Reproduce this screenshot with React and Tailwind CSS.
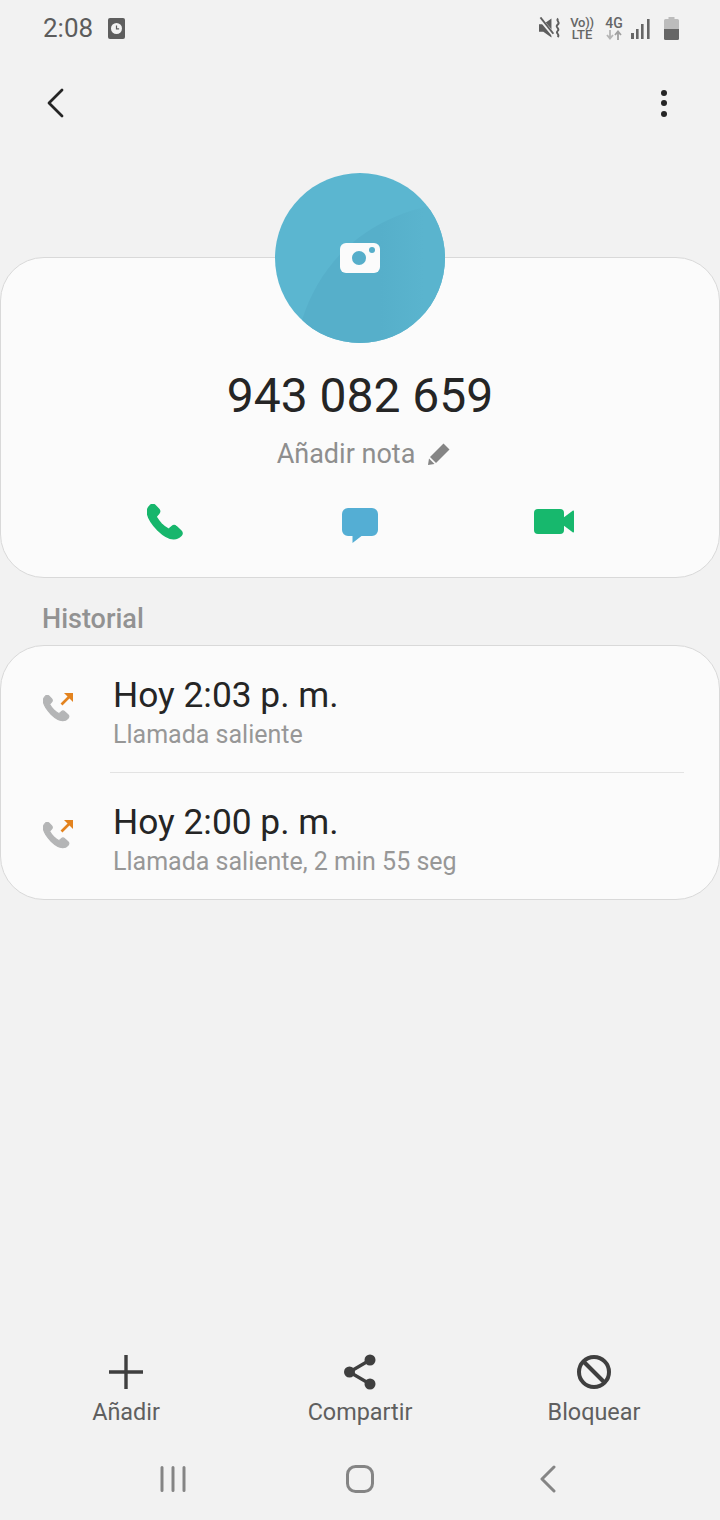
import React from "react";

const font = { fontFamily: "Roboto, sans-serif" };

function PhoneGlyph({ className, fill }) {
  // handset running from top left to bottom right
  return (
    <svg className={className} viewBox="0 0 38 38" fill={fill} stroke={fill} strokeWidth="1.6" strokeLinejoin="round">
      <path d="M3.2 1.6C4.6.2 6.6.2 7.9 1.4l3.6 3.7c1.3 1.3 1.3 3 .2 4.3l-2 2.3c-.5.6-.5 1.2-.1 2 1.2 2.2 2.8 4.3 4.8 6.3 2 1.9 4 3.5 6.2 4.7.8.4 1.4.4 2-.1l2.4-2.1c1.3-1.1 3-1.1 4.3.2l4.5 4.1c1.4 1.4 1.4 3.4.1 4.8-1.9 2.2-4.4 3.3-7.4 3.2-4.2-.2-9.9-3.3-15.5-8.7C5.6 20.6 1.2 14.1.5 9 .1 6 1 3.6 3.2 1.6Z" />
    </svg>
  );
}

function OutgoingIcon() {
  return (
    <div className="relative w-[30px] h-[30px]">
      <PhoneGlyph className="absolute left-0 bottom-0 w-[28px] h-[28px]" fill="#b4b5b6" />
      <svg className="absolute right-[-1px] top-[-1px] w-[14px] h-[14px]" viewBox="0 0 14 14" fill="none">
        <path d="M1.5 12.5 11 3" stroke="#e3831f" strokeWidth="2.6" />
        <path d="M4 1h9v9Z" fill="#e3831f" />
      </svg>
    </div>
  );
}

function CallRow({ title, subtitle }) {
  return (
    <div className="flex h-[126px] items-center pl-[42px]">
      <div className="w-[70px] -mt-[2px]">
        <OutgoingIcon />
      </div>
      <div className="flex flex-col pt-[6px]">
        <span className="text-[35.3px] leading-[40px] text-[#252525]">{title}</span>
        <span className="text-[25px] leading-[30px] mt-[5px] text-[#979797]">{subtitle}</span>
      </div>
    </div>
  );
}

function BottomAction({ icon, label }) {
  return (
    <div className="flex w-[234px] flex-col items-center">
      <div className="flex h-[36px] w-[36px] items-center justify-center">{icon}</div>
      <span className="mt-[7px] text-[23.4px] leading-[30px] text-[#5f5f5f]">{label}</span>
    </div>
  );
}

export default function App() {
  return (
    <div className="flex h-[1520px] w-[720px] flex-col overflow-hidden bg-[#f2f2f2]" style={font}>
      {/* Status bar */}
      <div className="flex h-[56px] items-center justify-between pl-[43px] pr-[41px]">
        <div className="flex items-center gap-[15px]">
          <span className="text-[26px] leading-[30px] text-[#5c5c5c]">2:08</span>
          <svg className="w-[17px] h-[21px]" viewBox="0 0 17 21">
            <rect width="17" height="21" rx="2" fill="#5e5e5e" />
            <circle cx="8.5" cy="10.5" r="5.5" fill="#f2f2f2" />
            <path d="M8.5 7.5v3.4h2.6" stroke="#5e5e5e" strokeWidth="1.2" fill="none" />
          </svg>
        </div>
        <div className="flex items-center">
          <svg className="w-[23px] h-[22px]" viewBox="0 0 24 22" fill="none">
            <path d="M0 7h4.5L13 1v20l-8.5-6H0Z" fill="#5e5e5e" />
            <path d="M1 1l14 17" stroke="#f2f2f2" strokeWidth="4" />
            <path d="M1.5 0 15 17" stroke="#5e5e5e" strokeWidth="2" />
            <path d="M20 1c-3 2.500 3 4-.5 6.500s3 4 0 6.500 3 3.500 0 6.500" stroke="#5e5e5e" strokeWidth="2" />
          </svg>
          <div className="ml-[9px] flex w-[22px] flex-col items-center text-[#666666] font-medium">
            <span className="text-[13px] leading-[13px] tracking-[-0.3px] whitespace-nowrap">Vo))</span>
            <span className="text-[13px] leading-[11px]">LTE</span>
          </div>
          <div className="ml-[13px] flex w-[16px] flex-col items-center">
            <span className="text-[14px] leading-[13px] font-medium text-[#666666]">4G</span>
            <svg className="w-[16px] h-[10px]" viewBox="0 0 16 10" fill="none">
              <path d="M4 0v8M1 5l3 3.500L7 5" stroke="#b5b5b5" strokeWidth="1.800" />
              <path d="M12 10V2M9 5l3-3.500L15 5" stroke="#a0a0a0" strokeWidth="1.800" />
            </svg>
          </div>
          <svg className="ml-[9px] w-[19px] h-[21px]" viewBox="0 0 19 21" fill="#666666">
            <rect x="0" y="15" width="3" height="6" />
            <rect x="5" y="11" width="2.600" height="10" />
            <rect x="10" y="6" width="2.600" height="15" />
            <rect x="16" y="1" width="2.600" height="20" />
          </svg>
          <svg className="ml-[14px] w-[15px] h-[23px]" viewBox="0 0 15 23">
            <path d="M4.500 0h6v2h3a1.500 1.500 0 0 1 1.500 1.500V12H0V3.500A1.500 1.500 0 0 1 1.500 2h3Z" fill="#bcbcbc" />
            <path d="M0 12h15v9.500a1.500 1.500 0 0 1-1.500 1.500h-12A1.500 1.500 0 0 1 0 21.500Z" fill="#666666" />
          </svg>
        </div>
      </div>

      {/* Top actions */}
      <div className="flex h-[94px] items-center justify-between pl-[46px] pr-[53px]">
        <svg className="w-[18px] h-[30px]" viewBox="0 0 18 30" fill="none">
          <path d="M16 2 3 15l13 13" stroke="#252525" strokeWidth="2.800" strokeLinecap="round" strokeLinejoin="round" />
        </svg>
        <div className="flex flex-col gap-[4.500px]">
          <div className="h-[6px] w-[6px] rounded-full bg-[#252525]" />
          <div className="h-[6px] w-[6px] rounded-full bg-[#252525]" />
          <div className="h-[6px] w-[6px] rounded-full bg-[#252525]" />
        </div>
      </div>

      {/* Contact card */}
      <div className="relative mt-[107px] flex h-[321px] flex-col items-center rounded-[44px] border border-[#d9d9d9] bg-[#fbfbfb]">
        <div className="relative -mt-[85px] flex h-[170px] w-[170px] items-center justify-center overflow-hidden rounded-full bg-[#5bb6d0]">
          <svg className="absolute inset-0 h-full w-full" viewBox="0 0 170 170">
            <defs>
              <linearGradient id="avatarShade" x1="0" y1="0" x2="1" y2="0">
                <stop offset="0.55" stopColor="#56afca" />
                <stop offset="0.85" stopColor="#5ab4ce" />
              </linearGradient>
            </defs>
            <path d="M27 147C45 90 90 42 170 30V170H27Z" fill="url(#avatarShade)" />
          </svg>
          <svg className="relative w-[40px] h-[30px]" viewBox="0 0 40 30">
            <rect width="40" height="30" rx="6" fill="#fbfbfb" />
            <circle cx="19" cy="15" r="7" fill="#56aeca" />
            <circle cx="32" cy="7" r="3" fill="#56aeca" />
          </svg>
        </div>
        <div className="mt-[27px] text-[48px] leading-[52px] text-[#252525]">943 082 659</div>
        <div className="mt-[16px] ml-[7px] flex items-center gap-[13px]">
          <span className="text-[27px] leading-[32px] text-[#8e8e8e]">Añadir nota</span>
          <svg className="w-[22px] h-[22px]" viewBox="0 0 22 22" fill="#858585">
            <path d="M15.500.5 21.500 6.500 8 20 2 14Z" />
            <path d="M1 15.500 6.500 21 0 22Z" />
          </svg>
        </div>
        <div className="mt-[32px] flex w-[590px] justify-between items-center">
          <div className="flex w-[200px] justify-center pl-[6px]">
            <PhoneGlyph className="h-[38px] w-[38px]" fill="#17b66c" />
          </div>
          <div className="flex w-[200px] justify-center mt-[6px]">
            <svg className="w-[36px] h-[35px]" viewBox="0 0 36 35" fill="#54aed4">
              <path d="M6 0h24a6 6 0 0 1 6 6v16a6 6 0 0 1-6 6H19.500L10.500 35v-7H6a6 6 0 0 1-6-6V6a6 6 0 0 1 6-6Z" />
            </svg>
          </div>
          <div className="flex w-[200px] justify-center pr-[5px] mb-[2px]">
            <svg className="w-[40px] h-[25px]" viewBox="0 0 40 25" fill="#17b86d">
              <rect width="30" height="25" rx="4" />
              <path d="M29 9 39 1.500a.8.8 0 0 1 1 .7v20.600a.8.8 0 0 1-1 .7L29 16Z" />
            </svg>
          </div>
        </div>
      </div>

      {/* Historial */}
      <div className="flex h-[67px] items-center pl-[42px] pt-[14px] text-[27px] leading-[30px] font-medium text-[#929292]">
        Historial
      </div>
      <div className="h-[255px] rounded-[44px] border border-[#d9d9d9] bg-[#fbfbfb]">
        <CallRow title="Hoy 2:03 p. m." subtitle="Llamada saliente" />
        <div className="ml-[109px] mr-[35px] h-px bg-[#e3e3e3]" />
        <CallRow title="Hoy 2:00 p. m." subtitle="Llamada saliente, 2 min 55 seg" />
      </div>

      {/* Bottom actions */}
      <div className="mt-auto flex items-start justify-center">
        <BottomAction
          label="Añadir"
          icon={
            <svg className="w-[36px] h-[36px]" viewBox="0 0 36 36" fill="none">
              <path d="M18 1v34M1 18h34" stroke="#3f3f3f" strokeWidth="3.400" />
            </svg>
          }
        />
        <BottomAction
          label="Compartir"
          icon={
            <svg className="w-[32px] h-[36px]" viewBox="0 0 32 36" fill="#3f3f3f">
              <path d="M5.500 18 26 6M5.500 18 26 30" stroke="#3f3f3f" strokeWidth="3.200" fill="none" />
              <circle cx="5.500" cy="18" r="5.500" />
              <circle cx="26" cy="6" r="5.500" />
              <circle cx="26" cy="30" r="5.500" />
            </svg>
          }
        />
        <BottomAction
          label="Bloquear"
          icon={
            <svg className="w-[36px] h-[36px]" viewBox="0 0 36 36" fill="none">
              <circle cx="18" cy="18" r="15" stroke="#3f3f3f" strokeWidth="4" />
              <path d="M7.500 7.500 28.500 28.500" stroke="#3f3f3f" strokeWidth="4" />
            </svg>
          }
        />
      </div>

      {/* Navigation bar */}
      <div className="mt-[37px] mb-[26px] flex h-[30px] items-center justify-center">
        <div className="flex w-[187px] justify-center">
          <svg className="w-[26px] h-[26px]" viewBox="0 0 26 26" stroke="#858585" strokeWidth="3" strokeLinecap="round">
            <path d="M2 1.500v23M13 1.500v23M24 1.500v23" />
          </svg>
        </div>
        <div className="flex w-[187px] justify-center">
          <svg className="w-[28px] h-[28px]" viewBox="0 0 28 28" fill="none">
            <rect x="1.500" y="1.500" width="25" height="25" rx="8" stroke="#858585" strokeWidth="3" />
          </svg>
        </div>
        <div className="flex w-[187px] justify-center">
          <svg className="w-[17px] h-[28px]" viewBox="0 0 17 28" fill="none">
            <path d="M15 2 3 14l12 12" stroke="#858585" strokeWidth="3" strokeLinecap="round" strokeLinejoin="round" />
          </svg>
        </div>
      </div>
    </div>
  );
}
